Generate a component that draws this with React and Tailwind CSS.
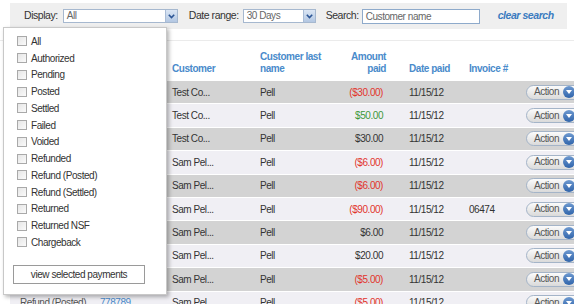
import React from "react";

const rows = [
  { a: "", id: "", c: "Test Co...", amt: "($30.00)", t: "red", inv: "" },
  { a: "", id: "", c: "Test Co...", amt: "$50.00", t: "green", inv: "" },
  { a: "", id: "", c: "Test Co...", amt: "$30.00", t: "dark", inv: "" },
  { a: "", id: "", c: "Sam Pel...", amt: "($6.00)", t: "red", inv: "" },
  { a: "", id: "", c: "Sam Pel...", amt: "($6.00)", t: "red", inv: "" },
  { a: "", id: "", c: "Sam Pel...", amt: "($90.00)", t: "red", inv: "06474" },
  { a: "", id: "", c: "Sam Pel...", amt: "$6.00", t: "dark", inv: "" },
  { a: "", id: "", c: "Sam Pel...", amt: "$20.00", t: "dark", inv: "" },
  { a: "", id: "", c: "Sam Pel...", amt: "($5.00)", t: "red", inv: "" },
  { a: "Refund (Posted)...", id: "778789", c: "Sam Pel...", amt: "($5.00)", t: "red", inv: "" },
];

const options = [
  "All",
  "Authorized",
  "Pending",
  "Posted",
  "Settled",
  "Failed",
  "Voided",
  "Refunded",
  "Refund (Posted)",
  "Refund (Settled)",
  "Returned",
  "Returned NSF",
  "Chargeback",
];

function Arrow() {
  return (
    <div className="w-[12px] h-[12px] bg-gradient-to-b from-[#dbe6f4] to-[#b3c7e2] border-l border-[#a9bcd6] flex items-center justify-center">
      <svg width="7" height="5" viewBox="0 0 7 5">
        <path d="M0.8 0.8 L3.5 3.6 L6.2 0.8" fill="none" stroke="#2c5595" strokeWidth="1.6" />
      </svg>
    </div>
  );
}

function Select({ w, value }) {
  return (
    <div
      className={`${w} h-[14px] bg-white border border-[#a6b8cf] flex items-center justify-between`}
    >
      <span className="pl-[3px] text-[#666] leading-none">{value}</span>
      <Arrow />
    </div>
  );
}

function ActionBtn() {
  return (
    <div className="h-[15px] w-[60px] rounded-full border border-[#a4b4c8] bg-gradient-to-b from-[#fbfbfb] to-[#dadada] flex items-center pl-[7px] gap-[4px]">
      <span className="text-[#555] leading-none">Action</span>
      <span className="w-[12px] h-[12px] rounded-full bg-gradient-to-b from-[#6f9ad0] to-[#2f64ab] flex items-center justify-center">
        <svg width="6" height="4" viewBox="0 0 6 4">
          <path d="M0 0 L6 0 L3 4 Z" fill="#fff" />
        </svg>
      </span>
    </div>
  );
}

export default function App() {
  const colorOf = (t) =>
    t === "red" ? "text-[#e2342c]" : t === "green" ? "text-[#3c983a]" : "text-[#333]";
  return (
    <div
      className="relative w-[574px] h-[304px] overflow-hidden bg-white text-[10px] tracking-[-0.45px] text-[#333]"
      style={{ fontFamily: '"Liberation Sans", Arial, sans-serif' }}
    >
      <div className="pt-[3px]">
        {/* filter bar */}
        <div className="ml-[10px] w-[557px] h-[26px] bg-[#efefef] flex items-center">
          <span className="ml-[14px] mr-[5px] text-[#333] text-[10.5px]">Display:</span>
          <Select w="w-[115px]" value="All" />
          <span className="ml-[11px] mr-[4px] text-[#333] text-[10.5px]">Date range:</span>
          <Select w="w-[73px]" value="30 Days" />
          <span className="ml-[10px] mr-[3px] text-[#333] text-[10.5px]">Search:</span>
          <div className="w-[118px] h-[15px] bg-white border border-[#8eaacb] flex items-center pl-[3px] text-[#666]">
            Customer name
          </div>
          <span className="ml-[18px] font-bold italic text-[#3b7bc0] text-[10.5px]">clear search</span>
        </div>
        <div className="h-[12px] border-b border-[#ebebeb]" />

        {/* table */}
        <div className="ml-[10px]">
          <div className="grid grid-cols-[85px_73px_88px_74px_62px_73px_55px_1fr] h-[40px] items-end pb-[6px] font-bold text-[#4a8bcb] leading-[12px]">
            <div />
            <div />
            <div className="pl-1">Customer</div>
            <div className="pl-1">
              Customer last
              <br />
              name
            </div>
            <div className="text-right pr-[6px]">
              Amount
              <br />
              paid
            </div>
            <div className="pl-[17px]">Date paid</div>
            <div className="pl-1">Invoice #</div>
            <div />
          </div>
          {rows.map((r, i) => (
            <div
              key={i}
              className={`grid grid-cols-[85px_73px_88px_74px_62px_73px_55px_1fr] h-[23.4px] items-center border-b border-white ${
                i % 2 === 0 ? "bg-[#d3d3d3]" : "bg-[#f0eff4]"
              }`}
            >
              <div className="pl-[10px] text-[#555] whitespace-nowrap">{r.a}</div>
              <div className="pl-[5px] text-[#4a8bcb]">{r.id}</div>
              <div className="pl-1">{r.c}</div>
              <div className="pl-1">Pell</div>
              <div className={`text-right pr-[9px] ${colorOf(r.t)}`}>{r.amt}</div>
              <div className="pl-[17px]">11/15/12</div>
              <div className="pl-1">{r.inv}</div>
              <div className="pl-[6px]">
                <ActionBtn />
              </div>
            </div>
          ))}
        </div>
      </div>

      {/* dropdown panel */}
      <div className="absolute left-[3px] top-[27px] w-[164px] h-[268px] bg-white border border-[#c8c8c8] shadow-[2px_2px_4px_rgba(0,0,0,0.3)]">
        <div className="pt-[5px]">
          {options.map((o) => (
            <div key={o} className="h-[16.75px] flex items-center pl-[13px]">
              <span className="w-[10px] h-[10px] border border-[#a9a9a9] bg-gradient-to-br from-[#e6e6e6] to-[#fafafa] mr-[4px]" />
              <span className="text-[#333]">{o}</span>
            </div>
          ))}
        </div>
        <div className="absolute left-[9px] top-[237px] w-[132px] h-[19px] border border-[#9a9a9a] flex items-center justify-center text-[#333]">
          view selected payments
        </div>
      </div>
    </div>
  );
}
